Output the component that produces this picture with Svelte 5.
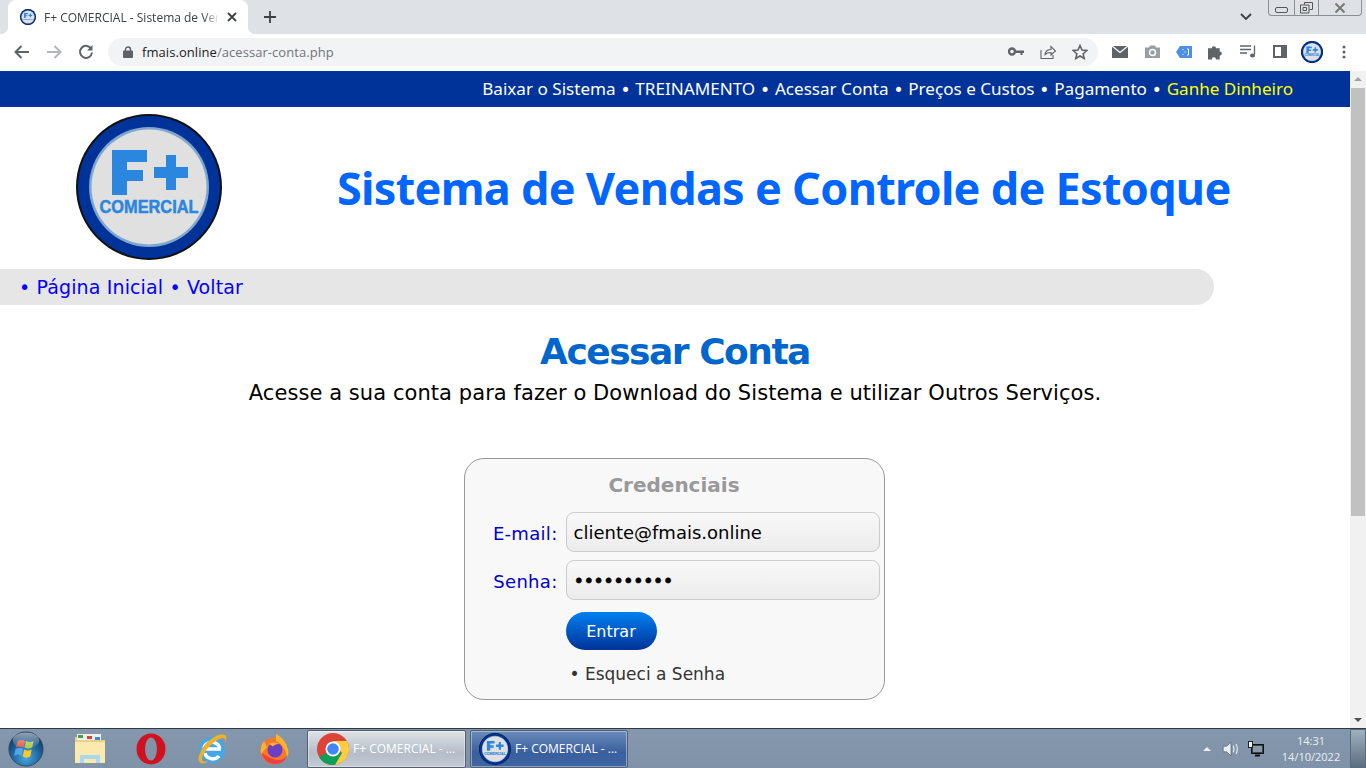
<script>
  const navLinks = ['Baixar o Sistema', 'TREINAMENTO', 'Acessar Conta', 'Preços e Custos', 'Pagamento'];
</script>

{#snippet fLogo(size)}
  <svg class="flogo" width={size} height={size} viewBox="0 0 146 146">
    <circle cx="73" cy="73" r="73" fill="#111" />
    <circle cx="73" cy="73" r="71" fill="#003399" />
    <circle cx="73" cy="73" r="60" fill="#7ea6cf" />
    <circle cx="73" cy="73" r="57.5" fill="#e0e0e0" />
    <path d="M36 36h35v12H51v8h16v11H51v14H36z" fill="#2a86de" />
    <path d="M90 41h10v12h12v11h-12v12H90V64H78V53h12z" fill="#2a86de" />
    <text x="73" y="99" text-anchor="middle" class="logotext" textLength="99" lengthAdjust="spacingAndGlyphs">COMERCIAL</text>
  </svg>
{/snippet}

<div class="screen">
  <div class="tabstrip">
    <div class="tab">
      {@render fLogo(16)}
      <span class="tabtitle">F+ COMERCIAL - Sistema de Ven</span>
      <svg class="tabx" width="10" height="10" viewBox="0 0 10 10"><path d="M1 1l8 8M9 1l-8 8" stroke="#3c4043" stroke-width="1.8" /></svg>
    </div>
    <svg class="plus" width="12" height="12" viewBox="0 0 12 12"><path d="M6 0v12M0 6h12" stroke="#3c4043" stroke-width="1.8" /></svg>
    <div class="grow"></div>
    <svg class="chev" width="12" height="8" viewBox="0 0 12 8"><path d="M1 1l5 5 5-5" fill="none" stroke="#3c4043" stroke-width="1.8" /></svg>
    <div class="winbtns">
      <div class="wb wb-min"><span class="minbar"></span></div>
      <div class="wb wb-max">
        <svg width="14" height="12" viewBox="0 0 14 12"><path d="M4.500 2.500V.5h8v7h-3M.5 3h8.500v8H.5z M3 5.500h3.500v3H3z" fill="none" stroke="#555" /></svg>
      </div>
      <div class="wb wb-close">
        <svg width="12" height="10" viewBox="0 0 12 10"><path d="M1.500 0.500l9 9M10.500 0.500l-9 9" stroke="#777" stroke-width="2" /></svg>
      </div>
    </div>
  </div>

  <div class="toolbar">
    <svg class="navicon first" width="16" height="14" viewBox="0 0 16 14"><path d="M15 7H2M7.500 1L1.500 7l6 6" fill="none" stroke="#5f6368" stroke-width="2" /></svg>
    <svg class="navicon" width="16" height="14" viewBox="0 0 16 14"><path d="M1 7h13M8.500 1l6 6-6 6" fill="none" stroke="#b4b6b9" stroke-width="2" /></svg>
    <svg class="navicon" width="16" height="16" viewBox="0 0 16 16"><path d="M13.300 5A6 6 0 1 0 14 8.500" fill="none" stroke="#5f6368" stroke-width="2" /><path d="M14.500 1v5.500H9z" fill="#5f6368" /></svg>
    <div class="omnibox">
      <svg width="10" height="12" viewBox="0 0 10 12"><path d="M2.500 5V3.500a2.500 2.500 0 0 1 5 0V5" fill="none" stroke="#5f6368" stroke-width="1.400" /><rect y="4.500" width="10" height="7.500" rx="1" fill="#5f6368" /></svg>
      <span class="url"><b>fmais.online</b>/acessar-conta.php</span>
      <div class="grow"></div>
      <svg class="omniicon" width="16" height="9" viewBox="0 0 16 9"><circle cx="4" cy="4.500" r="3" fill="none" stroke="#5f6368" stroke-width="2.400" /><path d="M7 3.500h9v2.500h-1.500v2h-2V6H7z" fill="#5f6368" /></svg>
      <svg class="omniicon" width="16" height="14" viewBox="0 0 16 14"><path d="M1 5v8.500h12V10M5 9.500c.5-3.500 3-5 6-5V1.500L15.500 6 11 10V7.500c-2.500 0-4.500.5-6 2z" fill="none" stroke="#5f6368" stroke-width="1.100" /></svg>
      <svg class="omniicon" width="16" height="16" viewBox="0 0 16 16"><path d="M8 1.500l2 4.500 4.800.5-3.600 3.200 1 4.800L8 12l-4.200 2.500 1-4.800L1.200 6.500 6 6z" fill="none" stroke="#5f6368" stroke-width="1.600" /></svg>
    </div>
    <div class="extensions">
      <span><svg width="16" height="12" viewBox="0 0 16 12"><rect width="16" height="12" fill="#5f6368" /><path d="M0 0l8 6.500L16 0" fill="none" stroke="#fff" stroke-width="1.300" /></svg></span>
      <span><svg width="15" height="13" viewBox="0 0 15 13"><path d="M0 2.500h4L5 .5h5l1 2h4V13H0z" fill="#9a9da1" /><circle cx="7.500" cy="7.500" r="3" fill="none" stroke="#fff" stroke-width="1.500" /></svg></span>
      <span><svg width="16" height="12" viewBox="0 0 16 12"><path d="M0 6l4-6h12v12H4z" fill="#4b8fe8" /><path d="M6.500 3.500h1M6.500 8.500h1M11 3h1.500v6H11M9 5.500v1" stroke="#fff" fill="none" /></svg></span>
      <span><svg width="16" height="16" viewBox="0 0 15 15"><path d="M0 4h3.500a2 2 0 1 1 4 0H11v3a2 2 0 1 1 0 4v3.500H7.500a2 2 0 1 0-4 0H0z" fill="#5f6368" /></svg></span>
      <span><svg width="16" height="13" viewBox="0 0 16 13"><path d="M0 1h11M0 4.500h11M0 8h7M14.500 .5v9" stroke="#5f6368" stroke-width="1.300" fill="none" /><ellipse cx="12.500" cy="10.500" rx="2.500" ry="2" fill="#5f6368" /></svg></span>
      <span><svg width="14" height="13" viewBox="0 0 14 13"><rect x="1" y="1" width="12" height="11" fill="#fff" stroke="#5f6368" stroke-width="2" /><rect x="8" y="1" width="5" height="11" fill="#5f6368" /></svg></span>
      <span>{@render fLogo(22)}</span>
      <span><svg width="4" height="14" viewBox="0 0 4 14"><circle cx="2" cy="2" r="1.500" fill="#5f6368" /><circle cx="2" cy="7" r="1.500" fill="#5f6368" /><circle cx="2" cy="12" r="1.500" fill="#5f6368" /></svg></span>
    </div>
  </div>

  <div class="viewport">
    <div class="page">
      <nav class="topnav">
        {#each navLinks as link}
          <span>{link}</span><span class="sep">•</span>
        {/each}
        <span class="gold">Ganhe Dinheiro</span>
      </nav>

      <header class="brand">
        <div class="brandlogo">{@render fLogo(146)}</div>
        <h1>Sistema de Vendas e Controle de Estoque</h1>
      </header>

      <div class="crumbs">• Página Inicial • Voltar</div>

      <main>
        <h2>Acessar Conta</h2>
        <p class="lead">Acesse a sua conta para fazer o Download do Sistema e utilizar Outros Serviços.</p>

        <form class="card">
          <h3>Credenciais</h3>
          <div class="field">
            <label for="email">E-mail:</label>
            <input id="email" type="text" value="cliente@fmais.online" />
          </div>
          <div class="field">
            <label for="senha">Senha:</label>
            <input id="senha" class="secret" type="password" value="1234567890" />
          </div>
          <div class="actions">
            <button type="button">Entrar</button>
            <span class="forgot">• Esqueci a Senha</span>
          </div>
        </form>
      </main>
    </div>

    <div class="scrollbar">
      <span class="arrow up"></span>
      <div class="thumb"></div>
      <div class="grow"></div>
      <span class="arrow down"></span>
    </div>
  </div>

  <div class="taskbar">
    <div class="quick">
      <svg width="36" height="36" viewBox="0 0 38 38">
        <defs>
          <radialGradient id="orbg" cx="50%" cy="75%" r="70%"><stop offset="0" stop-color="#47a9e0" /><stop offset="0.65" stop-color="#1b5c95" /><stop offset="1" stop-color="#12385f" /></radialGradient>
          <linearGradient id="orbshine" x1="0" y1="0" x2="0" y2="1"><stop offset="0" stop-color="#fff" stop-opacity=".55" /><stop offset="1" stop-color="#fff" stop-opacity=".05" /></linearGradient>
        </defs>
        <circle cx="19" cy="19" r="18" fill="url(#orbg)" stroke="#33475c" />
        <path d="M10 11c3-2 5-2 8-.5l-1.500 7c-3-1.500-5-1.500-8 0z" fill="#e2533a" />
        <path d="M19 10.500c3 1.500 5 1.500 8 0l-1.500 7c-3 1.500-5 1.500-8 0z" fill="#9fc843" />
        <path d="M8 19c3-1.500 5-1.500 8 0l-1.500 7c-3-1.500-5-1.500-8 0z" fill="#55a5e8" />
        <path d="M17 19.500c3 1.500 5 1.500 8 0L23.500 27c-3 1.500-5 1.500-8 0z" fill="#f7c92f" />
        <ellipse cx="19" cy="10" rx="14" ry="8.500" fill="url(#orbshine)" />
      </svg>
      <svg width="32" height="32" viewBox="0 0 32 32">
        <path d="M1 4h13l2 3h15v23H1z" fill="#e8cf8e" />
        <path d="M3 1h24v6H3z" fill="#f4f1e4" />
        <rect x="4" y="2" width="5" height="3" fill="#3da04e" /><rect x="13" y="3" width="5" height="3" fill="#c8483c" /><rect x="21" y="4" width="5" height="3" fill="#3a8ad8" />
        <path d="M1 9h30v21H1z" fill="#fbe9ae" />
        <path d="M6 30v-8h20v8h-4v-4H10v4z" fill="#a8d8f2" />
      </svg>
      <svg width="30" height="32" viewBox="0 0 30 32">
        <ellipse cx="15" cy="16" rx="14.500" ry="15.500" fill="#cf1120" />
        <ellipse cx="15" cy="16" rx="6" ry="11.500" fill="#8093a8" />
      </svg>
      <svg width="32" height="32" viewBox="0 0 32 32">
        <circle cx="16" cy="17" r="13" fill="#45a6e8" />
        <path d="M7 16h18M9 20c1 6 10 8 14 3" fill="none" stroke="#fff" stroke-width="3.500" />
        <path d="M8 15c1-6 12-9 16 0" fill="none" stroke="#fff" stroke-width="3.500" />
        <path d="M29 2C22-1 9 8 4 20c-2 5-2 9 1 10 3 1 6-1 8-2-4 1-7 1-7-2 0-6 12-19 20-21 3-.5 4 1 2 5 3-4 3-7 1-8z" fill="#eeb22a" />
      </svg>
      <svg width="32" height="32" viewBox="0 0 32 32">
        <circle cx="16" cy="18" r="13.500" fill="#f5792a" />
        <path d="M6 8c-3 4-4 9-3 13l6-7zM18 1c6 3 11 9 12 16 1 3 0 5-1 7-1-8-6-14-11-16z" fill="#fbb52c" />
        <path d="M4 20c1 7 7 11 13 11 6 0 10-3 12-8-3 4-9 5-14 3-4-1.500-7-3-11-6z" fill="#f03f3c" />
        <circle cx="17" cy="17" r="7.500" fill="#6a3fc4" />
        <path d="M11 11c3-2 8-2 10 0-3 0-5 1-6 2.500z" fill="#fbb52c" />
      </svg>
    </div>

    <div class="taskbtn">
      <svg width="32" height="32" viewBox="0 0 32 32">
        <circle cx="16" cy="16" r="16" fill="#db4437" />
        <path d="M16 16L2.100 24A16 16 0 0 0 16 32c1 0 2 0 2.500-.5L25 20z" fill="#0f9d58" />
        <path d="M16 8h13.900A16 16 0 0 1 18 31.900L25 20z" fill="#ffcd40" />
        <circle cx="16" cy="16" r="7.500" fill="#fff" />
        <circle cx="16" cy="16" r="5.800" fill="#4285f4" />
      </svg>
      <span>F+ COMERCIAL - ...</span>
    </div>
    <div class="taskbtn active">
      {@render fLogo(32)}
      <span>F+ COMERCIAL - ...</span>
    </div>

    <div class="grow"></div>

    <div class="tray">
      <span class="trayup"></span>
      <svg width="18" height="18" viewBox="0 0 16 16"><path d="M1 5.500h3L8 2v12L4 10.500H1z" fill="#e8edf2" stroke="#4a5a6a" stroke-width=".6" /><path d="M10 5c1 2 1 4 0 6M12.500 3.500c1.500 3 1.500 6 0 9" fill="none" stroke="#e8edf2" /></svg>
      <svg width="16" height="16" viewBox="0 0 16 16"><rect x="3.500" y="3.500" width="12" height="9" fill="#38434e" stroke="#111" /><rect x="5" y="5" width="9" height="6" fill="#8a99a8" /><path d="M7 14.500h5" stroke="#111" stroke-width="2" /><rect x="0.500" y="0.500" width="4" height="6" fill="#f2f2f2" stroke="#222" /></svg>
    </div>
    <div class="clock">
      <span>14:31</span>
      <span>14/10/2022</span>
    </div>
    <div class="showdesk"></div>
  </div>
</div>

<style>
  :global(body) {
    margin: 0;
    overflow: hidden;
  }

  .screen {
    width: 1366px;
    height: 768px;
    display: flex;
    flex-direction: column;
    overflow: hidden;
    background: #fff;
    font-family: "DejaVu Sans", Verdana, sans-serif;
  }

  .grow {
    flex: 1;
  }

  /* chrome */
  .tabstrip {
    height: 34px;
    flex: none;
    background: #dee1e6;
    display: flex;
    align-items: flex-end;
    padding-left: 8px;
    box-sizing: border-box;
  }

  .tab {
    width: 240px;
    height: 34px;
    background: #fff;
    border-radius: 8px 8px 0 0;
    display: flex;
    align-items: center;
    padding-left: 12px;
    box-sizing: border-box;
    gap: 8px;
    position: relative;
  }

  .tab::before,
  .tab::after {
    content: '';
    position: absolute;
    bottom: 0;
    width: 8px;
    height: 8px;
  }

  .tab::before {
    left: -8px;
    background: radial-gradient(circle at 0 0, transparent 8px, #fff 8.5px);
  }

  .tab::after {
    right: -8px;
    background: radial-gradient(circle at 100% 0, transparent 8px, #fff 8.5px);
  }

  .flogo {
    flex: none;
    display: block;
  }

  .logotext {
    font-family: "Liberation Sans", Arial, sans-serif;
    font-weight: bold;
    font-size: 18px;
    fill: #2a86de;
    stroke: #2a86de;
    stroke-width: 0.5px;
  }

  .tabtitle {
    font: 12px "Open Sans", sans-serif;
    color: #3c4043;
    width: 175px;
    white-space: nowrap;
    -webkit-mask-image: linear-gradient(to right, #000 160px, transparent 175px);
    mask-image: linear-gradient(to right, #000 160px, transparent 175px);
  }

  .tabx {
    flex: none;
  }

  .plus {
    margin: 0 0 11px 16px;
  }

  .chev {
    margin-bottom: 13px;
    margin-right: 16px;
  }

  .winbtns {
    align-self: flex-start;
    display: flex;
    height: 16px;
    margin-right: 4px;
    border: 1px solid #8a8f96;
    border-top: 0;
    border-radius: 0 0 4px 4px;
    box-sizing: border-box;
  }

  .wb {
    height: 15px;
    display: flex;
    align-items: center;
    justify-content: center;
  }

  .wb-min {
    width: 25px;
    border-right: 1px solid #8a8f96;
  }

  .minbar {
    width: 11px;
    height: 4px;
    border: 1px solid #555;
    border-radius: 2px;
    margin-top: 4px;
  }

  .wb-max {
    width: 23px;
    border-right: 1px solid #8a8f96;
  }

  .wb-close {
    width: 42px;
  }

  .toolbar {
    height: 37px;
    flex: none;
    background: #fff;
    display: flex;
    align-items: center;
    padding: 0 0 1px 0;
    box-sizing: border-box;
    border-bottom: 1px solid #fff;
  }

  .navicon {
    margin-left: 16px;
    flex: none;
  }

  .navicon.first {
    margin-left: 14px;
  }

  .omnibox {
    width: 990px;
    height: 28px;
    margin-left: 14px;
    background: #f1f3f4;
    border-radius: 14px;
    display: flex;
    align-items: center;
    padding: 0 10px 0 15px;
    box-sizing: border-box;
    flex: none;
  }

  .url {
    margin-left: 9px;
    font: 13px "Open Sans", sans-serif;
    letter-spacing: 0.06px;
    color: #70757a;
  }

  .url b {
    font-weight: normal;
    color: #202124;
  }

  .omniicon {
    margin-left: 16px;
  }

  .extensions {
    display: flex;
    align-items: center;
    margin-left: 6px;
  }

  .extensions span {
    width: 32px;
    display: flex;
    justify-content: center;
    align-items: center;
  }

  /* page */
  .viewport {
    flex: 1;
    min-height: 0;
    display: flex;
  }

  .page {
    width: 1350px;
    flex: none;
    overflow: hidden;
  }

  .topnav {
    height: 36px;
    box-sizing: border-box;
    padding: 0 57px 2px 0;
    background: #003399;
    color: #fff;
    display: flex;
    align-items: center;
    justify-content: flex-end;
    gap: 4.8px;
    font-family: "Noto Sans", "DejaVu Sans", sans-serif;
    font-size: 17.1px;
  }

  .sep {
    font-family: "DejaVu Sans", sans-serif;
    padding-top: 3px;
  }

  .gold {
    color: #ffff00;
  }

  .brand {
    height: 162px;
    display: flex;
    align-items: center;
    padding-bottom: 2px;
    box-sizing: border-box;
  }

  .brandlogo {
    margin-left: 76px;
  }

  h1 {
    margin: 0 0 0 115px;
    font-family: "Noto Sans", "DejaVu Sans", sans-serif;
    font-size: 45px;
    letter-spacing: -0.72px;
    font-weight: bold;
    color: #0066ff;
    white-space: nowrap;
  }

  .crumbs {
    width: 1214px;
    height: 36px;
    box-sizing: border-box;
    padding-left: 19px;
    background: #e6e6e7;
    border-radius: 0 18px 18px 0;
    color: #0000ff;
    font-size: 19px;
    letter-spacing: 0.13px;
    line-height: 36px;
  }

  main {
    display: flex;
    flex-direction: column;
    align-items: center;
  }

  h2 {
    margin: 25px 0 0;
    font-size: 36px;
    letter-spacing: -1.5px;
    line-height: 44px;
    font-weight: bold;
    color: #0066cc;
  }

  .lead {
    margin: 4px 0 0;
    font-size: 21px;
    letter-spacing: 0.07px;
    line-height: 30px;
    color: #000;
  }

  .card {
    width: 421px;
    height: 242px;
    margin: 50px 2px 0 0;
    box-sizing: border-box;
    border: 1px solid #999;
    border-radius: 20px;
    background: #f8f8f8;
    flex: none;
  }

  h3 {
    margin: 13px 0 14px;
    text-align: center;
    font-size: 20px;
    line-height: 26px;
    font-weight: bold;
    color: #999;
  }

  .field {
    display: flex;
    align-items: center;
    height: 40px;
    margin-bottom: 8px;
  }

  label {
    width: 93px;
    padding-top: 2px;
    text-align: right;
    color: #0000cc;
    font-size: 18px;
    letter-spacing: 0.3px;
    margin-right: 8px;
    flex: none;
  }

  input {
    width: 314px;
    height: 40px;
    box-sizing: border-box;
    border: 1px solid #ccc;
    border-radius: 8px;
    background: linear-gradient(#f8f8f8, #ececec);
    padding: 0 7px;
    font-family: inherit;
    font-size: 18px;
    color: #000;
    outline: none;
  }

  .secret {
    letter-spacing: -0.7px;
    -webkit-text-stroke: 0.6px #000;
  }

  .actions {
    margin-left: 101px;
    padding-top: 4px;
    display: flex;
    flex-direction: column;
    align-items: flex-start;
  }

  button {
    width: 91px;
    height: 38px;
    border: 0;
    border-radius: 19px;
    background: linear-gradient(#0080f0, #003399);
    color: #fff;
    font-family: inherit;
    font-size: 16px;
    padding: 0;
  }

  .forgot {
    margin: 14px 0 0 4px;
    font-size: 17px;
    color: #333;
  }

  .scrollbar {
    width: 16px;
    flex: none;
    background: #f1f1f1;
    display: flex;
    flex-direction: column;
    align-items: center;
  }

  .thumb {
    width: 14px;
    height: 428px;
    background: #c1c1c1;
    margin-top: 7px;
  }

  .arrow {
    width: 0;
    height: 0;
    border-left: 4px solid transparent;
    border-right: 4px solid transparent;
    margin: 6px 0;
  }

  .arrow.up {
    border-bottom: 4px solid #a3a3a3;
    margin-bottom: 0;
  }

  .arrow.down {
    border-top: 4px solid #505050;
  }

  /* taskbar */
  .taskbar {
    height: 40px;
    flex: none;
    box-sizing: border-box;
    border-top: 1px solid #2e3a46;
    background: linear-gradient(#8497ac, #7f92a8);
    display: flex;
    align-items: center;
  }

  .quick {
    display: flex;
    align-items: center;
    gap: 30px;
    padding-left: 8px;
    width: 307px;
    box-sizing: border-box;
    flex: none;
  }

  .taskbtn {
    width: 159px;
    height: 38px;
    box-sizing: border-box;
    border: 1px solid #55606c;
    border-radius: 2px;
    background: linear-gradient(#dfe3e7, #b4bdc8 60%, #c2cad3);
    box-shadow: inset 0 0 0 1px rgba(255, 255, 255, 0.4);
    display: flex;
    align-items: center;
    gap: 4px;
    padding-left: 9px;
    margin-right: 4px;
    color: #fff;
    font: 12px "Open Sans", sans-serif;
    white-space: nowrap;
    flex: none;
  }

  .taskbtn.active {
    width: 158px;
    padding-left: 8px;
    background: linear-gradient(#6a8cbc, #3a5f9e 60%, #3f65a3);
  }

  .tray {
    display: flex;
    align-items: center;
    gap: 8px;
    margin-right: 14px;
  }

  .trayup {
    width: 0;
    height: 0;
    border-left: 4px solid transparent;
    border-right: 4px solid transparent;
    border-bottom: 4px solid #f0f0f0;
    margin-right: 3px;
  }

  .clock {
    width: 66px;
    display: flex;
    flex-direction: column;
    align-items: center;
    color: #eaf0f5;
    font: 11px/16px "Open Sans", sans-serif;
    margin-right: 6px;
  }

  .showdesk {
    width: 14px;
    height: 38px;
    border: 1px solid #5a6a7a;
    background: linear-gradient(#9fb0c0, #5a6d80);
    flex: none;
  }
</style>
